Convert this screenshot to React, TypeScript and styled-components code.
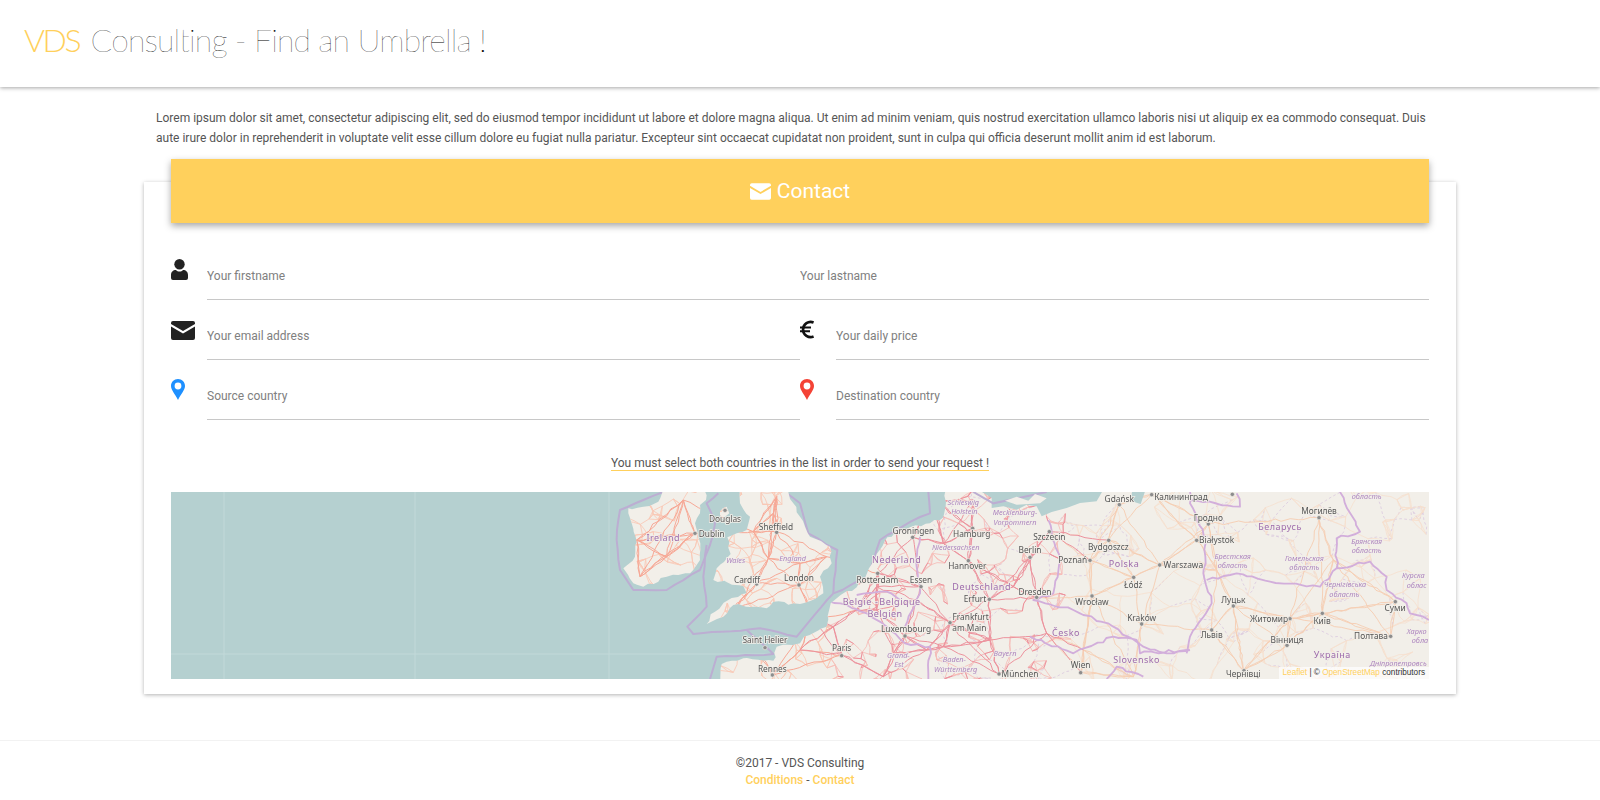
import React from "react";
import styled, { createGlobalStyle } from "styled-components";

const AMBER = "#ffd05c";

const Global = createGlobalStyle`
  html, body { margin: 0; padding: 0; background: #fff; }
  body { font-family: Roboto, "Liberation Sans", sans-serif; color: #444; }
  * { box-sizing: border-box; }
`;

const Page = styled.div`
  display: flex;
  flex-direction: column;
  height: 800px;
  overflow: hidden;
`;

const TopBar = styled.header`
  height: 87px;
  flex: none;
  display: flex;
  align-items: center;
  padding: 0 0 8px 24px;
  background: #fff;
  box-shadow: 0 1px 4px rgba(0, 0, 0, 0.35);
`;

const Title = styled.h1`
  margin: 0;
  font-family: Lato, "Open Sans", sans-serif;
  font-weight: 100;
  font-size: 32px;
  letter-spacing: -0.85px;
  color: #000;
  white-space: nowrap;
`;

const Brand = styled.span`
  color: ${AMBER};
  font-weight: 300;
  letter-spacing: -2.4px;
  margin-right: 3px;
`;

const Main = styled.main`
  flex: 1;
  display: flex;
  flex-direction: column;
  align-items: center;
`;

const Intro = styled.p`
  width: 1288px;
  margin: 21px 0 34px;
  font-size: 12px;
  line-height: 20px;
  color: #555;
`;

const Card = styled.section`
  width: 1312px;
  height: 512px;
  padding: 0 27px;
  background: #fff;
  box-shadow: 0 1px 4px rgba(0, 0, 0, 0.3);
`;

const CardHeader = styled.h2`
  height: 64px;
  margin: -23px 0 17px;
  display: flex;
  align-items: center;
  justify-content: center;
  gap: 6px;
  background: ${AMBER};
  color: #fff;
  font-size: 21px;
  font-weight: 400;
  box-shadow: 0 3px 7px rgba(0, 0, 0, 0.35);
`;

const FormGrid = styled.div`
  display: grid;
  grid-template-columns: 1fr 1fr;
  grid-auto-rows: 60px;
`;

const Field = styled.div`
  display: flex;
  align-items: stretch;
  min-width: 0;
`;

const IconSlot = styled.div`
  width: 36px;
  flex: none;
  padding-top: ${(p: { $top: number }) => p.$top}px;
`;

const TextInput = styled.input`
  flex: 1;
  min-width: 0;
  border: 0;
  border-bottom: 1px solid #c8c8c8;
  outline: none;
  background: transparent;
  padding: 12px 0 0;
  font: 12px Roboto, sans-serif;
  color: #444;
  &::placeholder { color: #808080; opacity: 1; }
`;

const Notice = styled.div`
  display: flex;
  justify-content: center;
  margin: 36px 0 21px;
`;

const NoticeText = styled.span`
  font-size: 12px;
  line-height: 14px;
  color: #555;
  border-bottom: 1px solid ${AMBER};
`;

const MapBox = styled.div`
  position: relative;
  height: 187px;
  overflow: hidden;
  background: #b5d0d0;
`;

const MapArt = styled.svg`
  display: block;
  width: 100%;
  height: 100%;
  filter: blur(0.35px);
`;

const Attribution = styled.div`
  position: absolute;
  right: 0;
  bottom: 0;
  height: 12px;
  padding: 0 4px;
  background: rgba(255, 255, 255, 0.7);
  font: 8.2px/12px "Liberation Sans", sans-serif;
  color: #333;
  white-space: nowrap;
`;

const AmberLink = styled.a`
  color: ${AMBER};
  text-decoration: none;
`;

const Footer = styled.footer`
  height: 60px;
  flex: none;
  padding-top: 14px;
  border-top: 1px solid #f2f2f2;
  text-align: center;
  font-size: 12px;
  line-height: 17px;
  color: #555;
`;

const FooterLink = styled(AmberLink)`
  font-weight: 500;
`;

const UserIcon = () => (
  <svg width="17" height="21" viewBox="0 0 17 21" style={{ display: "block" }}>
    <circle cx="8.5" cy="5.2" r="5.2" fill="#222" />
    <path fill="#222" d="M0 19v-3c0-3 2-5 5-5 1 1 2 1.5 3.5 1.5s2.5-.5 3.5-1.5c3 0 5 2 5 5v3a2 2 0 0 1-2 2H2a2 2 0 0 1-2-2z" />
  </svg>
);

const MailIcon = ({ color, w, h }: { color: string; w: number; h: number }) => (
  <svg width={w} height={h} viewBox="0 0 24 19" style={{ display: "block" }}>
    <path fill={color} d="M2 0h20a2 2 0 0 1 2 2v1L12 10 0 3V2a2 2 0 0 1 2-2z" />
    <path fill={color} d="M0 5.6 12 12.4 24 5.6V17a2 2 0 0 1-2 2H2a2 2 0 0 1-2-2z" />
  </svg>
);

const PinIcon = ({ color }: { color: string }) => (
  <svg width="14" height="21" viewBox="0 0 14 21" style={{ display: "block" }}>
    <path fill={color} fillRule="evenodd" d="M7 0C3 0 0 3 0 7c0 4 4 8 7 14 3-6 7-10 7-14 0-4-3-7-7-7zm0 3.6a3.4 3.4 0 1 1 0 6.8 3.4 3.4 0 0 1 0-6.8z" />
  </svg>
);

const EuroIcon = () => (
  <svg width="14" height="19" viewBox="0 0 14 19" style={{ display: "block" }}>
    <path fill="none" stroke="#111" strokeWidth="2.6" d="M13.6 2.5A7.6 7.6 0 1 0 13.6 16.5" />
    <path fill="none" stroke="#111" strokeWidth="2" d="M0 7.6h11M0 11.2h10" />
  </svg>
);

/* ---------- map data, in units of a third of a pixel ---------- */

type Pt = [number, number];
const E = 1290; // offset of the eastern half of the sketch

function rng(seed: number) {
  let s = seed;
  return () => {
    s = (s * 16807) % 2147483647;
    return s / 2147483647;
  };
}

const pts = (src: string): Pt[] => {
  const n = src.trim().split(/\s+/).map(Number);
  const out: Pt[] = [];
  for (let i = 0; i + 1 < n.length; i += 2) out.push([n[i], n[i + 1]]);
  return out;
};

/* Break each straight leg into short jittered pieces, so coasts and roads read as hand-surveyed lines. */
const rough = (line: Pt[], r: () => number, step: number, amp: number, closed = false): string => {
  const seq = closed ? [...line, line[0]] : line;
  let d = `M${seq[0][0]} ${seq[0][1]}`;
  for (let i = 1; i < seq.length; i++) {
    const a = seq[i - 1];
    const b = seq[i];
    const n = Math.max(1, Math.round(Math.hypot(b[0] - a[0], b[1] - a[1]) / step));
    for (let j = 1; j <= n; j++) {
      const t = j / n;
      const edge = j === n;
      const x = a[0] + (b[0] - a[0]) * t + (edge ? 0 : (r() - 0.5) * amp);
      const y = a[1] + (b[1] - a[1]) * t + (edge ? 0 : (r() - 0.5) * amp);
      d += `L${x.toFixed(0)} ${y.toFixed(0)}`;
    }
  }
  return closed ? `${d}Z` : d;
};

const hubs: Pt[] = [
  [285, 160], [250, 60], [120, 290], [110, 180], [200, 230], [530, 155], [460, 155], [505, 235], [597, 315], [470, 310],
  [400, 390], [520, 100], [530, 50], [680, 230], [600, 250], [725, 525], [770, 390], [830, 390], [835, 280], [830, 320],
  [960, 320], [950, 360], [1050, 430], [915, 468], [1118, 145], [1105, 242], [1290, 232], [1240, 320], [1310, 352],
  [1168, 358], [1170, 480], [1030, 500], [1197, 582], [980, 510], [517, 585], [600, 510], [880, 520], [850, 590],
  [940, 172], [1030, 190], [1348, 155], [1470, 241], [1557, 75], [1525, 180], [1679, 255], [1600, 292], [1475, 348],
  [1625, 432], [1443, 577], [1340, 460], [1450, 510], [1655, 42], [1825, 132], [1790, 180], [2157, 113], [1850, 270],
  [2200, 240], [1900, 378], [1835, 450], [2167, 400], [2070, 415], [2060, 495], [2372, 470], [2385, 365], [1930, 572],
  [1600, 590], [1000, 60], [1120, 60], [640, 420], [700, 440],
];

const isles: string[] = [];
const westMajor: string[] = [];
const eastMajor: string[] = [];
const westMinor: string[] = [];
const isleMinor: string[] = [];
const eastMinor: string[] = [];
const dashes: string[] = [];

const landSrc: string[] = [
  "85 85 130 80 175 65 190 20 320 20 318 60 300 75 300 100 285 130 295 170 300 240 270 280 200 290 130 320 100 310 70 265 105 230 110 185 95 130",
  "420 20 560 20 580 70 600 110 630 170 690 200 695 250 660 290 670 340 600 372 520 365 500 385 400 375 370 410 320 432 345 395 385 360 440 340 430 318 340 300 350 265 392 222 382 172 440 150 450 110 420 70",
  "360 95 380 80 388 100 368 118",
  "360 620 365 552 430 535 520 542 530 500 600 490 612 470 680 440 692 370 722 345 770 322 800 282 830 222 862 172 930 142 990 130 1030 112 1040 20 2510 20 2510 620",
];

const land: string[] = [];
const seaLines: string[] = [];
const countryLines: string[] = [];

{
  const r = rng(4242);
  landSrc.forEach((s) => land.push(rough(pts(s), r, 16, 9, true)));

  [
    "190 36 130 60 60 90 50 180 60 270 100 330 200 330 300 270 330 195 345 130 320 70 355 40",
    "320 195 310 290 320 380 262 440 280 462 480 445 590 470 700 340 800 292 840 180 932 125 990 100 985 36",
    "555 36 600 70 625 160 712 210 702 300 700 340",
    "440 450 520 522 350 530 330 597",
    "1345 120 1340 60 1420 36",
  ].forEach((s) => seaLines.push(rough(pts(s), r, 30, 4)));

  [
    "690 365 740 375 800 400 860 440 915 490 990 500 985 597",
    "960 170 950 260 960 340 915 440",
    "770 345 860 335 900 360",
    `1345 120 1380 240 1360 340 1300 360 1420 390 1540 440 1630 500 1700 520 ${E + 480} 510`,
    `${E + 530} 180 ${E + 520} 280 ${E + 545} 370 ${E + 480} 470 ${E + 470} 520`,
    `${E + 530} 300 ${E + 620} 280 ${E + 720} 305 ${E + 870} 320 ${E + 920} 265 ${E + 1020} 245 ${E + 1070} 290 ${E + 1070} 330 ${E + 1130} 370 ${E + 1140} 400 ${E + 1197} 420`,
    `${E + 930} 36 ${E + 990} 155 ${E + 920} 175 ${E + 920} 265`,
    `${E + 480} 60 ${E + 630} 80 ${E + 620} 40`,
    `${E + 480} 36 ${E + 480} 70 ${E + 530} 180`,
    `${E} 470 ${E + 130} 520 ${E + 250} 470 ${E + 320} 480 ${E + 330} 520 ${E + 470} 510`,
    `${E + 230} 597 ${E + 260} 560 ${E + 340} 590`,
  ].forEach((s) => countryLines.push(rough(pts(s), r, 18, 9)));

  const link = (a: Pt, b: Pt, amp: number) => rough([a, b], r, 22, amp);
  const nearest = (h: Pt, list: Pt[], k: number) =>
    list
      .filter((o) => o !== h)
      .map((o) => ({ o, d: Math.hypot(o[0] - h[0], o[1] - h[1]) }))
      .sort((x, y) => x.d - y.d)
      .slice(0, k);

  hubs.forEach((h) => {
    nearest(h, hubs, 4).forEach(({ o }) => {
      const d = link(h, o, 9);
      if (h[0] < 700) isles.push(d);
      else if (h[0] < 1400) westMajor.push(d);
      else eastMajor.push(d);
    });
  });

  /* scattered local towns give the finer web of minor roads, thicker towards the west */
  const towns: Pt[] = [];
  for (let i = 0; i < 1100; i++) {
    const x = Math.round(40 + r() * 2460);
    const y = Math.round(20 + r() * 600);
    const keep = x < 1400 ? 1 : 0.45;
    if (r() < keep) towns.push([x, y]);
  }
  towns.forEach((t) => {
    nearest(t, towns, 3).forEach(({ o }, i) => {
      const d = link(t, o, 8);
      if (t[0] < 700) isleMinor.push(d);
      else if (t[0] < 1400) (i === 0 && r() < 0.5 ? westMajor : westMinor).push(d);
      else eastMinor.push(d);
    });
    if (t[0] > 1000 && r() < 0.55) {
      const o = nearest(t, towns, 5)[4].o;
      dashes.push(link(t, o, 12));
    }
  });
}

const seaPatches: string[] = [
  "M1120 20L1175 54 1175 84 1210 79 1250 89 1280 74 1310 79 1325 109 1355 96 1400 84 1440 69 1490 64 1515 20Z",
  "M1600 20H1640L1622 72 1590 62Z",
];

type Label = [string, number, number];

const cities: Label[] = [
  ["Douglas", 375, 125], ["Dublin", 335, 170], ["Sheffield", 528, 150], ["Cardiff", 441, 308], ["London", 597, 302],
  ["Saint Helier", 495, 488], ["Rennes", 517, 577], ["Paris", 725, 514], ["Groningen", 940, 163], ["Hamburg", 1115, 172],
  ["Berlin", 1290, 218], ["Szczecin", E + 58, 180], ["Hannover", 1102, 268], ["Rotterdam", 832, 309], ["Essen", 963, 310],
  ["Erfurt", 1125, 367], ["Dresden", 1305, 344], ["Frankfurt", 1112, 421], ["am Main", 1108, 453], ["Luxembourg", 918, 455],
  ["München", 1260, 590], ["Gdańsk", E + 268, 65], ["Калининград", E + 453, 60], ["Гродно", E + 535, 123], ["Могилёв", E + 867, 103],
  ["Białystok", E + 560, 189], ["Bydgoszcz", E + 235, 209], ["Poznań", E + 128, 250], ["Warszawa", E + 460, 263], ["Łódź", E + 310, 323],
  ["Луцьк", E + 610, 369], ["Wrocław", E + 186, 374], ["Суми", E + 1095, 392], ["Kraków", E + 335, 422], ["Житомир", E + 717, 425],
  ["Київ", E + 876, 431], ["Львів", E + 545, 475], ["Полтава", E + 1023, 477], ["Вінниця", E + 771, 488], ["Wien", E + 152, 563],
  ["Чернівці", E + 640, 590],
];

const countries: Label[] = [
  ["Ireland", 190, 182], ["Nederland", 890, 250], ["Deutschland", 1145, 330], ["Belgie", 772, 375], ["-", 830, 375],
  ["Belgique", 900, 375], ["Belgien", 855, 410], ["Беларусь", E + 750, 150], ["Polska", E + 282, 261], ["Česko", E + 108, 468],
  ["Slovensko", E + 320, 548], ["Україна", E + 907, 533],
];

const regions: Label[] = [
  ["Wales", 407, 250], ["England", 578, 242], ["Niedersachsen", 1067, 209], ["Schleswig", 1090, 75], ["Holstein", 1093, 103],
  ["Mecklenburg-", 1245, 106], ["Vorpommern", 1245, 134], ["Grand-", 895, 535], ["Est", 897, 562], ["Baden-", 1063, 547],
  ["Württemberg", 1067, 575], ["Bayern", 1215, 528], ["Брянская", E + 1010, 192], ["область", E + 1010, 220],
  ["Брестская", E + 608, 237], ["область", E + 608, 265], ["Гомельская", E + 823, 242], ["область", E + 823, 270],
  ["Курска", E + 1150, 295], ["облас", E + 1160, 323], ["Чернігівська", E + 945, 322], ["область", E + 943, 350],
  ["Харко", E + 1160, 462], ["обла", E + 1170, 490], ["Дніпропетровсь", E + 1105, 558], ["область", E + 1010, 58],
];

const dots: Pt[] = [
  [375, 91], [285, 160], [530, 157], [597, 315], [470, 312], [495, 503], [725, 527], [938, 172], [1118, 145], [1105, 242],
  [1290, 232], [833, 280], [963, 320], [1168, 358], [1310, 352], [1050, 428], [915, 468], [1197, 582], [517, 585],
  [E + 268, 74], [E + 365, 44], [E + 607, 43], [E + 535, 132], [E + 867, 113], [E + 500, 181], [E + 58, 155], [E + 236, 181],
  [E + 180, 241], [E + 389, 255], [E + 311, 292], [E + 186, 348], [E + 610, 378], [E + 1096, 365], [E + 335, 432], [E + 780, 416],
  [E + 877, 400], [E + 545, 450], [E + 1082, 469], [E + 771, 496], [E + 152, 578], [E + 642, 572],
];

const seams = [-1128, -555, 27];

const EuropeMap = () => (
  <MapArt viewBox="-1287 36 3774 561" preserveAspectRatio="none" role="img" aria-label="Map of western Europe">
    <defs>
      <clipPath id="landClip">
        {land.map((d) => (
          <path key={d} d={d} />
        ))}
      </clipPath>
    </defs>
    <rect x="-1287" y="36" width="3774" height="561" fill="#b5d0d0" />
    {seams.map((x) => (
      <line key={x} x1={x} x2={x} y1="36" y2="597" stroke="#c2d9d9" strokeWidth="3" />
    ))}
    <line x1="-1287" x2="700" y1="522" y2="522" stroke="#c2d9d9" strokeWidth="3" />
    <g fill="none" stroke="#bcaed2" strokeWidth="6" strokeLinejoin="round">
      {seaLines.map((d) => (
        <path key={d} d={d} />
      ))}
    </g>
    {land.map((d) => (
      <path key={d} d={d} fill="#f2efe9" />
    ))}
    <g clipPath="url(#landClip)" fill="none" strokeLinejoin="round">
      <path d={dashes.join("")} stroke="#dccbe0" strokeWidth="2.6" strokeDasharray="8 7" />
      <path d={eastMinor.join("")} stroke="#f6e0ce" strokeWidth="2.4" />
      <path d={isleMinor.join("")} stroke="#f9c8b6" strokeWidth="2.6" />
      <path d={westMinor.join("")} stroke="#f6bdb8" strokeWidth="2.6" />
      <path d={eastMajor.join("")} stroke="#f5cdb3" strokeWidth="2.8" />
      <path d={isles.join("")} stroke="#f6a896" strokeWidth="3" />
      <path d={westMajor.join("")} stroke="#ec929d" strokeWidth="3" />
      <path d={countryLines.join("")} stroke="#d2aedb" strokeWidth="5.5" />
    </g>
    {seaPatches.map((d) => (
      <path key={d} d={d} fill="#b5d0d0" />
    ))}
    <path d="M1120 36L1180 70 1340 36" fill="none" stroke="#bcaed2" strokeWidth="6" />
    <path d="M1215 62L1250 50 1285 62 1305 42 1340 55 1320 70 1250 74Z" fill="#f2efe9" />
    <g fill="#8d8d8d" stroke="#f2efe9" strokeWidth="2">
      {dots.map(([x, y]) => (
        <circle key={`${x}-${y}`} cx={x} cy={y} r="6.5" />
      ))}
    </g>
    <g fontFamily="'Noto Sans', sans-serif" textAnchor="middle" stroke="#f2efe9" strokeWidth="5" paintOrder="stroke">
      <g fontSize="25" fill="#555">
        {cities.map(([t, x, y]) => (
          <text key={t} x={x} y={y}>{t}</text>
        ))}
      </g>
      <g fontSize="27" fill="#9e6bac" letterSpacing="1.5">
        {countries.map(([t, x, y]) => (
          <text key={t} x={x} y={y}>{t}</text>
        ))}
      </g>
      <g fontSize="22" fill="#ad85bf" fontStyle="italic">
        {regions.map(([t, x, y]) => (
          <text key={`${t}-${x}`} x={x} y={y}>{t}</text>
        ))}
      </g>
    </g>
  </MapArt>
);

export default function App() {
  return (
    <Page>
      <Global />
      <TopBar>
        <Title>
          <Brand>VDS</Brand> Consulting - Find an Umbrella !
        </Title>
      </TopBar>
      <Main>
        <Intro>
          Lorem ipsum dolor sit amet, consectetur adipiscing elit, sed do eiusmod tempor incididunt ut labore et dolore magna aliqua. Ut enim ad minim veniam, quis nostrud exercitation ullamco laboris nisi ut aliquip ex ea commodo consequat. Duis aute irure dolor in reprehenderit in voluptate velit esse cillum dolore eu fugiat nulla pariatur. Excepteur sint occaecat cupidatat non proident, sunt in culpa qui officia deserunt mollit anim id est laborum.
        </Intro>
        <Card>
          <CardHeader>
            <MailIcon color="#fff" w={21} h={17} />
            Contact
          </CardHeader>
          <FormGrid>
            <Field>
              <IconSlot $top={19}>
                <UserIcon />
              </IconSlot>
              <TextInput placeholder="Your firstname" />
            </Field>
            <Field>
              <TextInput placeholder="Your lastname" />
            </Field>
            <Field>
              <IconSlot $top={21}>
                <MailIcon color="#222" w={24} h={19} />
              </IconSlot>
              <TextInput placeholder="Your email address" />
            </Field>
            <Field>
              <IconSlot $top={20}>
                <EuroIcon />
              </IconSlot>
              <TextInput placeholder="Your daily price" />
            </Field>
            <Field>
              <IconSlot $top={19}>
                <PinIcon color="#1e90ff" />
              </IconSlot>
              <TextInput placeholder="Source country" />
            </Field>
            <Field>
              <IconSlot $top={19}>
                <PinIcon color="#f44336" />
              </IconSlot>
              <TextInput placeholder="Destination country" />
            </Field>
          </FormGrid>
          <Notice>
            <NoticeText>You must select both countries in the list in order to send your request !</NoticeText>
          </Notice>
          <MapBox>
            <EuropeMap />
            <Attribution>
              <AmberLink href="#">Leaflet</AmberLink> | © <AmberLink href="#">OpenStreetMap</AmberLink> contributors
            </Attribution>
          </MapBox>
        </Card>
      </Main>
      <Footer>
        ©2017 - VDS Consulting
        <br />
        <FooterLink href="#">Conditions</FooterLink> - <FooterLink href="#">Contact</FooterLink>
      </Footer>
    </Page>
  );
}
